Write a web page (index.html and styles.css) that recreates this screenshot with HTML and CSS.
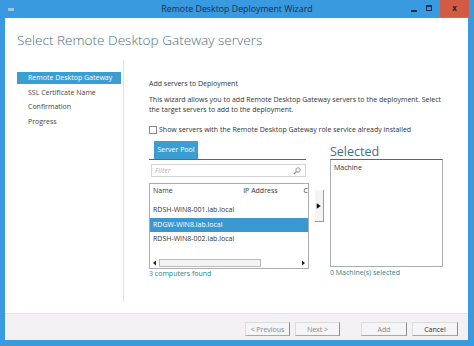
FILE: index.html
```html
<!DOCTYPE html>
<html lang="en">
<head>
    <meta charset="UTF-8">
    <title>Remote Desktop Deployment Wizard</title>
    <link rel="stylesheet" href="styles.css">
</head>
<body>
    <div class="window">
        <div class="titlebar">
            <span class="app-icon"></span>
            <span class="title">Remote Desktop Deployment Wizard</span>
            <div class="controls">
                <span class="ctl ctl-min"></span>
                <span class="ctl ctl-max"></span>
                <span class="ctl ctl-close">x</span>
            </div>
        </div>
        <div class="client">
            <h1 class="heading">Select Remote Desktop Gateway servers</h1>
            <div class="main">
                <ul class="nav">
                    <li class="active">Remote Desktop Gateway</li>
                    <li>SSL Certificate Name</li>
                    <li>Confirmation</li>
                    <li>Progress</li>
                </ul>
                <div class="content">
                    <p class="subtitle">Add servers to Deployment</p>
                    <p class="desc">This wizard allows you to add Remote Desktop Gateway servers to the deployment. Select the target servers to add to the deployment.</p>
                    <label class="check"><span class="box"></span>Show servers with the Remote Desktop Gateway role service already installed</label>
                    <div class="picker">
                        <div class="pool">
                            <div class="tabs"><span class="tab">Server Pool</span></div>
                            <div class="filter">
                                <span>Filter</span>
                                <svg width="8" height="8" viewBox="0 0 8 8"><circle cx="5" cy="3" r="2.2" fill="none" stroke="#888" stroke-width="0.9"/><path d="M3.4 4.6 L1 7" stroke="#888" stroke-width="1.1"/></svg>
                            </div>
                            <div class="list">
                                <div class="list-head">
                                    <span class="col-name">Name</span>
                                    <span class="col-ip">IP Address</span>
                                    <span class="col-c">C</span>
                                </div>
                                <div class="row">RDSH-WIN8-001.lab.local</div>
                                <div class="row selected-row">RDGW-WIN8.lab.local</div>
                                <div class="row">RDSH-WIN8-002.lab.local</div>
                                <div class="hscroll">
                                    <svg class="sb-arrow" width="8" height="8" viewBox="0 0 8 8"><path d="M2 4 L5 1.5 L5 6.5 Z" fill="#222"/></svg>
                                    <span class="sb-thumb"></span>
                                    <span class="sb-track"></span>
                                    <svg class="sb-arrow" width="8" height="8" viewBox="0 0 8 8"><path d="M6 4 L3 1.5 L3 6.5 Z" fill="#222"/></svg>
                                </div>
                            </div>
                            <p class="count">3 computers found</p>
                        </div>
                        <div class="mover">
                            <button class="arrow-btn">
                                <svg width="9" height="8" viewBox="0 0 9 8"><path d="M2 1 L6.5 4 L2 7 Z" fill="#111"/></svg>
                            </button>
                        </div>
                        <div class="target">
                            <div class="target-title">Selected</div>
                            <div class="target-box">
                                <div class="target-head">Machine</div>
                            </div>
                            <p class="count">0 Machine(s) selected</p>
                        </div>
                    </div>
                </div>
            </div>
            <div class="footer">
                <button class="btn">&lt; Previous</button>
                <button class="btn">Next &gt;</button>
                <button class="btn btn-add">Add</button>
                <button class="btn">Cancel</button>
            </div>
        </div>
    </div>
</body>
</html>
```

FILE: styles.css
```css
body {
    margin: 0;
    font-family: "Open Sans", "Noto Sans", sans-serif;
    font-size: 7px;
    color: #333;
}

.window {
    display: flex;
    flex-direction: column;
    width: 474px;
    height: 346px;
    background: #3a9ae0;
}

/* title bar */
.titlebar {
    position: relative;
    display: flex;
    justify-content: center;
    align-items: center;
    height: 18px;
    flex: none;
}

.title {
    font-size: 8.8px;
    color: #1c2c4c;
}

.app-icon {
    position: absolute;
    left: 8px;
    top: 8px;
    width: 6px;
    height: 3px;
    background: #9cc4e6;
}

.controls {
    position: absolute;
    right: 5px;
    top: 0;
    display: flex;
    align-items: flex-start;
}

.ctl {
    display: block;
    width: 16px;
    height: 17px;
    position: relative;
}

.ctl-min::after {
    content: "";
    position: absolute;
    left: 5px;
    top: 10px;
    width: 6px;
    height: 2px;
    background: #1c2c4c;
}

.ctl-max::after {
    content: "";
    position: absolute;
    left: 4px;
    top: 5px;
    width: 4px;
    height: 3px;
    border: 1px solid #1c2c4c;
    border-top-width: 2px;
}

.ctl-close {
    width: 29px;
    margin-left: 2px;
    background: #d15b45;
    color: #3a1a14;
    font-size: 8px;
    font-weight: bold;
    text-align: center;
    line-height: 16px;
}

/* client area */
.client {
    flex: 1;
    display: flex;
    flex-direction: column;
    margin: 0 6px 6px 5px;
    background: #fff;
}

.heading {
    margin: 0;
    padding: 12px 12px 10px;
    font-size: 13.6px;
    line-height: 20px;
    font-weight: 300;
    color: #4e6e7c;
}

.main {
    flex: 1;
    display: flex;
    margin-bottom: 11px;
}

.nav {
    list-style: none;
    margin: 0;
    padding: 12px 2px 0 12px;
    width: 104px;
    border-right: 1px solid #e2e2e2;
}

.nav li {
    height: 12px;
    line-height: 12px;
    margin-bottom: 2.5px;
    padding-left: 11px;
    color: #444;
}

.nav li.active {
    background: #3a9ed2;
    color: #fff;
}

.content {
    padding: 19px 0 0 25px;
    flex: 1;
}

.content p {
    margin: 0;
}

.subtitle {
    line-height: 10px;
}

.desc {
    margin-top: 5.5px !important;
    line-height: 10.5px;
    width: 300px;
}

.check {
    display: flex;
    align-items: center;
    margin-top: 9.5px;
    line-height: 10px;
}

.box {
    width: 6px;
    height: 6px;
    border: 1px solid #888;
    margin-right: 2px;
    background: #fff;
}

/* picker */
.picker {
    display: flex;
    align-items: flex-start;
    margin-top: 6px;
}

.pool {
    width: 160px;
}

.tabs {
    display: flex;
    padding-left: 5px;
    border-bottom: 1px solid #5b6670;
    margin-right: 3px;
}

.tab {
    background: #3a9ed2;
    color: #fff;
    height: 18px;
    line-height: 18px;
    width: 44px;
    text-align: center;
    white-space: nowrap;
}

.filter {
    display: flex;
    justify-content: space-between;
    align-items: center;
    height: 11px;
    margin: 4px 3px 0 2px;
    padding: 0 4px 0 3px;
    border: 1px solid #d4d4d4;
    font-style: italic;
    color: #b0b0b0;
}

.list {
    display: flex;
    flex-direction: column;
    height: 84px;
    margin-top: 6px;
    border: 1px solid #a9adb3;
    overflow: hidden;
}

.list-head {
    display: flex;
    height: 14px;
    line-height: 14px;
    margin-bottom: 5px;
    padding-left: 3px;
    white-space: nowrap;
}

.col-name {
    width: 91px;
}

.col-ip {
    width: 61px;
}

.row {
    height: 14.5px;
    line-height: 14.5px;
    padding-left: 3px;
}

.selected-row {
    background: #3a98d0;
    color: #fff;
}

.hscroll {
    display: flex;
    align-items: stretch;
    height: 8px;
    margin: auto 1px 1px 1px;
}

.sb-arrow {
    display: block;
    flex: none;
}

.sb-thumb {
    width: 100px;
    border: 1px solid #b9b9b9;
    background: #f3f3f3;
}

.sb-track {
    flex: 1;
}

.count {
    line-height: 9px;
    color: #2b7f8e;
}

.mover {
    width: 21px;
    flex: none;
}

.arrow-btn {
    display: flex;
    align-items: center;
    width: 9px;
    height: 32px;
    margin: 49px 0 0 6px;
    padding: 0;
    border: none;
    border-right: 1px solid #9a9a9a;
    border-bottom: 1px solid #9a9a9a;
    background: #f4f4f4;
}

.target {
    width: 113px;
    margin-top: 4px;
}

.target-title {
    font-size: 12.5px;
    line-height: 14px;
    color: #3c7282;
}

.target-box {
    height: 106px;
    border: 1px solid #a9adb3;
    border-top-color: #5b6670;
    margin-bottom: 1px;
}

.target-head {
    padding: 3px 0 0 3px;
    line-height: 10px;
}

/* footer */
.footer {
    display: flex;
    justify-content: flex-end;
    align-items: flex-start;
    height: 27px;
    padding-right: 10px;
    background: #f3f1f4;
    border-top: 1px solid #e4e2e6;
    box-sizing: border-box;
}

.btn {
    width: 45px;
    height: 14px;
    margin: 8px 0 0 5px;
    padding: 0;
    font-family: inherit;
    font-size: 7px;
    color: #888;
    background: #f5f4f6;
    border: 1px solid #dcdcdc;
    border-right-color: #8c8c8c;
    border-bottom-color: #a8a8a8;
}

.btn-add {
    margin-left: 21px;
    width: 46px;
}

.btn:last-child {
    width: 46px;
    color: #333;
}
```
